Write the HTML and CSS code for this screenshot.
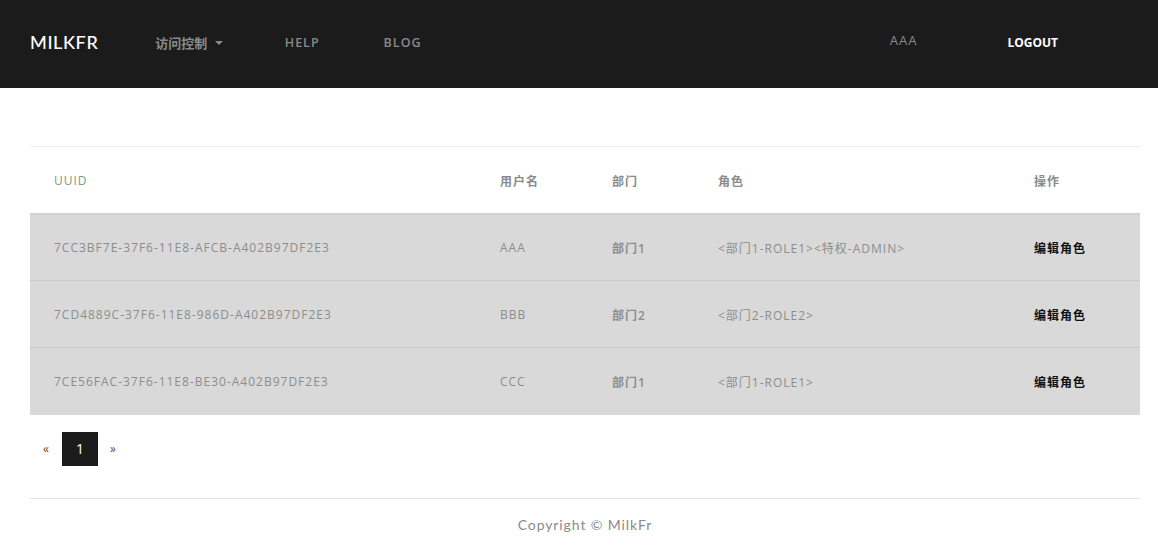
FILE: index.html
```html
<!DOCTYPE html>
<html lang="zh">
<head>
<meta charset="utf-8">
<title>MilkFr</title>
<link rel="stylesheet" href="styles.css">
</head>
<body>
<nav class="navbar">
  <a class="brand" href="#">MILKFR</a>
  <a class="nav-link dropdown" href="#">访问控制 <span class="caret"></span></a>
  <a class="nav-link" href="#">HELP</a>
  <a class="nav-link" href="#">BLOG</a>
  <div class="nav-right">
    <a class="nav-link user" href="#">AAA</a>
    <a class="nav-link logout" href="#">LOGOUT</a>
  </div>
</nav>
<main class="content">
  <table class="users">
    <colgroup>
      <col class="c-uuid"><col class="c-name"><col class="c-dept"><col class="c-role"><col class="c-op">
    </colgroup>
    <thead>
      <tr><th class="uuid-h">UUID</th><th>用户名</th><th>部门</th><th>角色</th><th>操作</th></tr>
    </thead>
    <tbody>
      <tr><td>7CC3BF7E-37F6-11E8-AFCB-A402B97DF2E3</td><td>AAA</td><td class="dept">部门1</td><td>&lt;部门1-ROLE1&gt;&lt;特权-ADMIN&gt;</td><td class="op"><a href="#">编辑角色</a></td></tr>
      <tr><td>7CD4889C-37F6-11E8-986D-A402B97DF2E3</td><td>BBB</td><td class="dept">部门2</td><td>&lt;部门2-ROLE2&gt;</td><td class="op"><a href="#">编辑角色</a></td></tr>
      <tr><td>7CE56FAC-37F6-11E8-BE30-A402B97DF2E3</td><td>CCC</td><td class="dept">部门1</td><td>&lt;部门1-ROLE1&gt;</td><td class="op"><a href="#">编辑角色</a></td></tr>
    </tbody>
  </table>
  <ul class="pagination">
    <li><a href="#" class="arrow">&laquo;</a></li>
    <li><a href="#" class="page active">1</a></li>
    <li><a href="#" class="arrow">&raquo;</a></li>
  </ul>
  <footer class="footer">Copyright © MilkFr</footer>
</main>
</body>
</html>
```
FILE: styles.css
```css
* { box-sizing: border-box; }
html, body { margin: 0; padding: 0; }
body {
  font-family: "Open Sans", "Noto Sans CJK SC", sans-serif;
  background: #fff;
  color: #888;
}
a { text-decoration: none; }

.navbar {
  height: 88px;
  background: #1b1b1b;
  display: flex;
  align-items: center;
  padding: 0 68px 4px 30px;
}
.brand {
  color: #fff;
  font-family: "Lato", "Noto Sans CJK SC", sans-serif;
  font-size: 18px;
  font-weight: 500;
  letter-spacing: 0.6px;
  margin-right: 25px;
}
.nav-link {
  color: #8a8a8a;
  font-size: 12.5px;
  font-weight: 600;
  letter-spacing: 1px;
  padding: 0 32px;
}
.dropdown { font-size: 13px; font-weight: 700; letter-spacing: 0; padding-right: 30px; }
.caret {
  display: inline-block;
  width: 0; height: 0;
  margin-left: 4px;
  vertical-align: 3px;
  border-left: 4px solid transparent;
  border-right: 4px solid transparent;
  border-top: 4px solid #8a8a8a;
}
.nav-right { margin-left: auto; display: flex; align-items: center; gap: 26px; }
.user { font-weight: 400; font-size: 13px; margin-top: -4px; }
.logout { color: #fff; font-weight: 700; letter-spacing: 0; font-size: 12px; }

.content { margin: 58px 18px 0 30px; }
.users {
  width: 100%;
  table-layout: fixed;
  border-collapse: collapse;
  border-top: 1px solid #ececec;
  font-size: 12px;
  letter-spacing: 1px;
}
.c-uuid { width: 446px; }
.c-name { width: 112px; }
.c-dept { width: 106px; }
.c-role { width: 316px; }
.c-op { width: 130px; }
.users th {
  height: 67px;
  padding: 2px 24px 0;
  text-align: left;
  font-weight: 700;
  font-size: 12px;
  color: #8a8a8a;
  border-bottom: 2px solid #d2d2d2;
}
.users th.uuid-h { font-weight: 400; color: #7e9a80; }
.users td {
  height: 67px;
  padding: 1px 24px 0;
  background: #d9d9d9;
  color: #8d8d8d;
  border-top: 1px solid #cacaca;
  white-space: nowrap;
}
.users tbody tr:first-child td { border-top: 0; }
.users td.dept { font-weight: 600; }
.users td.op a { color: #111; font-weight: 600; letter-spacing: 1px; }

.pagination {
  list-style: none;
  margin: 17px 0 0;
  padding: 0;
  display: flex;
  align-items: center;
}
.pagination a { display: block; }
.arrow { color: #6a4a2a; font-size: 12px; padding: 0 12px; }
.pagination li:first-child .arrow { padding-left: 13px; padding-right: 13px; }
.page {
  width: 36px;
  height: 34px;
  line-height: 34px;
  text-align: center;
  background: #1b1b1b;
  color: #fff;
  font-size: 14px;
}
.footer {
  margin-top: 32px;
  border-top: 1px solid #e3e3e3;
  text-align: center;
  padding-top: 17px;
  font-family: "Lato", sans-serif;
  font-size: 14px;
  letter-spacing: 0.9px;
  color: #8a8a8a;
}
```
